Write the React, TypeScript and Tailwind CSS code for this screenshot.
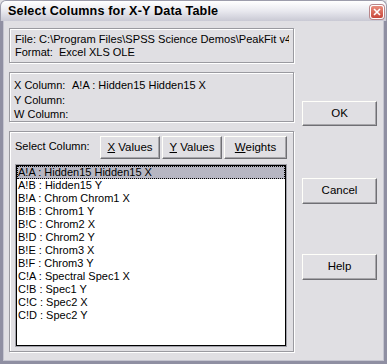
import React from "react";

const items = [
  "A!A : Hidden15 Hidden15 X",
  "A!B : Hidden15 Y",
  "B!A : Chrom Chrom1 X",
  "B!B : Chrom1 Y",
  "B!C : Chrom2 X",
  "B!D : Chrom2 Y",
  "B!E : Chrom3 X",
  "B!F : Chrom3 Y",
  "C!A : Spectral Spec1 X",
  "C!B : Spec1 Y",
  "C!C : Spec2 X",
  "C!D : Spec2 Y",
];

const group =
  "border border-[#9a9aa0] shadow-[inset_1px_1px_0_#ffffff,1px_1px_0_#ffffff]";

const btn =
  "flex items-center justify-center bg-[#e0dfe3] border border-t-[#fffffa] border-l-[#fffffa] border-r-[#6f6f74] border-b-[#6f6f74] shadow-[inset_-1px_-1px_0_#a7a6aa] text-black";

export default function App() {
  return (
    <div
      className="w-[387px] h-[364px] flex flex-col bg-[#e0dfe3] text-black overflow-hidden"
      style={{ fontFamily: '"Liberation Sans", Arial, sans-serif' }}
    >
      {/* title bar */}
      <div className="h-[21px] shrink-0 flex items-center justify-between pl-[7px] pr-[2px] rounded-t-[6px] bg-gradient-to-b from-[#ffffff] via-[#e9e9ef] to-[#c9c9d4] border border-[#9c9cab] border-b-0">
        <span className="text-[12.6px] font-bold tracking-[0.15px] leading-none pt-[1px]">
          Select Columns for X-Y Data Table
        </span>
        <div className="w-[14px] h-[14px] mt-[2px] rounded-[3px] bg-gradient-to-b from-[#e88c7c] to-[#c8453a] border border-[#ffffff] shadow-[0_0_0_1px_#b8868a] flex items-center justify-center">
          <svg width="8" height="8" viewBox="0 0 8 8">
            <path d="M1 1 L7 7 M7 1 L1 7" stroke="#ffffff" strokeWidth="1.6" />
          </svg>
        </div>
      </div>
      {/* body */}
      <div className="flex-1 flex border-l-[3px] border-r-[3px] border-b-[3px] border-[#8f8fa2] shadow-[inset_1px_0_0_#c4c4cf,inset_-1px_0_0_#c4c4cf,inset_0_-1px_0_#c4c4cf]">
        <div className="w-[291px] pl-[6px] pt-[7px] flex flex-col gap-[9px] text-[11px]">
          {/* file group */}
          <div className={`${group} h-[35px] pl-[5px] pt-[4px] leading-[13px] overflow-hidden whitespace-nowrap`}>
            <div className="overflow-hidden w-[274px] text-[11.1px]">File: C:\Program Files\SPSS Science Demos\PeakFit v4 Demo</div>
            <div>Format:&nbsp; Excel XLS OLE</div>
          </div>
          {/* columns group */}
          <div className={`${group} h-[50px] pl-[4px] pt-[5px] leading-[14.5px] whitespace-nowrap overflow-hidden`}>
            <div className="flex">
              <span className="w-[58px]">X Column:</span>
              <span>A!A : Hidden15 Hidden15 X</span>
            </div>
            <div>Y Column:</div>
            <div>W Column:</div>
          </div>
          {/* select group */}
          <div className={`${group} h-[221px] pl-[5px] pt-[4px] flex flex-col`}>
            <div className="flex items-start h-[28px]">
              <span className="w-[85px] pt-[2px]">Select Column:</span>
              <div className="flex gap-[2px] text-[11.5px]">
                <div className={`${btn} w-[60px] h-[23px]`}>
                  <span><u>X</u> Values</span>
                </div>
                <div className={`${btn} w-[60px] h-[23px]`}>
                  <span><u>Y</u> Values</span>
                </div>
                <div className={`${btn} w-[63px] h-[23px]`}>
                  <span><u>W</u>eights</span>
                </div>
              </div>
            </div>
            <div className="w-[272px] h-[183px] border border-[#a0a0a8]">
              <div className="w-full h-full border border-black bg-white leading-[13px]">
                {items.map((t, i) => (
                  <div
                    key={t}
                    className={
                      i === 0
                        ? "h-[13px] pl-[1px] bg-[#b6b6c2] outline outline-1 outline-dotted outline-black -outline-offset-1 whitespace-nowrap"
                        : "h-[13px] pl-[1px] whitespace-nowrap"
                    }
                  >
                    {t}
                  </div>
                ))}
              </div>
            </div>
          </div>
        </div>
        <div className="flex-1 flex flex-col pl-[8px] pt-[80px] text-[11.5px]">
          <div className={`${btn} w-[75px] h-[25px]`}>OK</div>
          <div className={`${btn} w-[75px] h-[26px] mt-[52px]`}>Cancel</div>
          <div className={`${btn} w-[75px] h-[26px] mt-[50px]`}>Help</div>
        </div>
      </div>
    </div>
  );
}
